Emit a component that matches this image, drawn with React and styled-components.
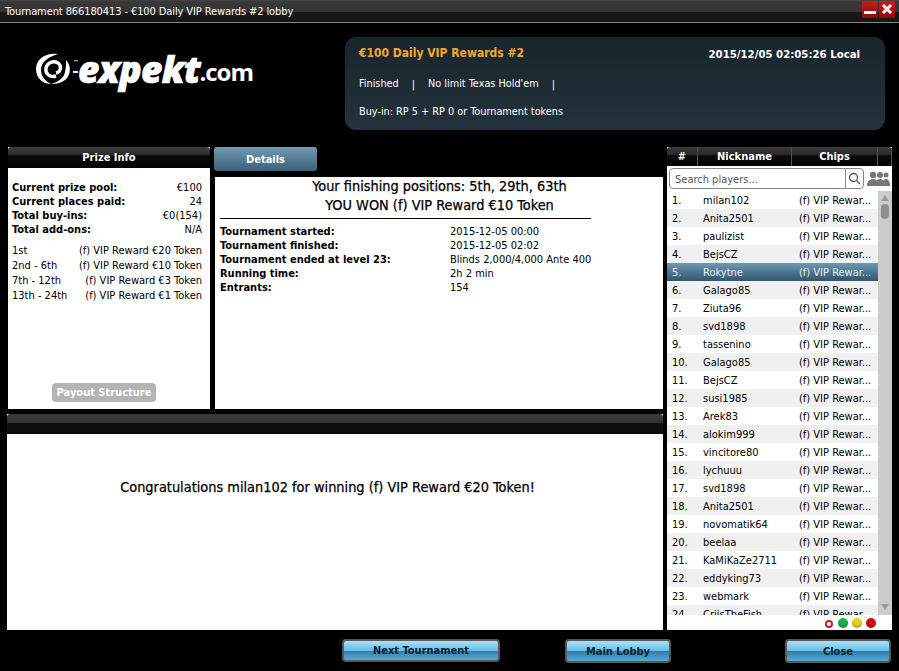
import React from "react";
import styled, { createGlobalStyle } from "styled-components";

const Global = createGlobalStyle`
  html, body { margin: 0; padding: 0; background: #000; }
  body { width: 899px; height: 671px; overflow: hidden; font-family: "DejaVu Sans Condensed", "DejaVu Sans", sans-serif; font-size: 11px; color: #000; }
  * { box-sizing: border-box; }
`;
const Page = styled.div`width: 899px; height: 671px; display: flex; flex-direction: column; background: #000; position: relative;`;
const TitleBar = styled.div`
  height: 23px; display: flex; align-items: center; justify-content: space-between; padding: 0 4px 0 5px;
  background: linear-gradient(#4a4a4a 0, #3a3a3a 1px, #333 12px, #1a1a1a 12px, #141414 22px, #888 22px);
  color: #fff; font-size: 11px; letter-spacing: -0.1px;
`;
const WinButtons = styled.div`display: flex; gap: 1px; margin-top: -5px;`;
const WinBtn = styled.div`
  width: 16px; height: 17px; background: linear-gradient(#d01818, #8e0a0a); display: flex; align-items: center; justify-content: center;
`;
const Header = styled.div`height: 124px; display: flex; padding: 14px 14px 0 36px; justify-content: space-between;`;
const Logo = styled.div`display: flex; align-items: center; height: 65px; color: #fff; font-family: "Open Sans", sans-serif; font-weight: 800; font-style: italic;`;
const LogoWord = styled.span`font-size: 37px; letter-spacing: -0.6px; line-height: 1; margin-top: -2px; -webkit-text-stroke: 0.7px #fff;`;
const LogoCom = styled.span`font-size: 24px; font-style: normal; font-weight: 700; letter-spacing: -1px; line-height: 1; margin-top: 5px; margin-left: -1px;`;
const InfoCard = styled.div`
  width: 540px; height: 93px; border-radius: 11px; background: linear-gradient(#1a252c, #23323c); color: #fff; padding: 7px 25px 0 14px;
`;
const InfoTop = styled.div`display: flex; justify-content: space-between; align-items: center; height: 20px; font-weight: 700;`;
const InfoTitle = styled.span`color: #f0a830; font-size: 12px; margin-top: -2px;`;
const InfoDate = styled.span`font-size: 11.3px;`;
const InfoRow = styled.div`display: flex; margin-top: ${p => p.$mt}px; height: 14px; align-items: center; font-size: 10.8px;`;
const Sep = styled.span`margin: 2px 13px 0 13px;`;
const Body = styled.div`flex: 1; display: flex; padding: 0 7px 0 7px; gap: 4px; height: 483px;`;
const MainCol = styled.div`width: 656px; display: flex; flex-direction: column;`;
const TopRow = styled.div`display: flex; height: 262px; padding-left: 1px; gap: 5px;`;
const PrizePanel = styled.section`width: 202px; display: flex; flex-direction: column; background: #fff;`;
const PanelHead = styled.div`
  height: 21px; flex: none; border-radius: 3px 3px 0 0; color: #fff; font-weight: 700; text-align: center; line-height: 22px;
  background: linear-gradient(#3d3d3d, #2e2e2e 7px, #0a0a0a 9px, #000);
`;
const PrizeBody = styled.div`flex: 1; padding: 13px 8px 0 4px; display: flex; flex-direction: column; position: relative;`;
const PrizeStat = styled.div`display: flex; justify-content: space-between; height: 14px; line-height: 14px;`;
const Bold = styled.span`font-weight: 700;`;
const PrizeList = styled.div`margin-top: 6px;`;
const PrizeRow = styled.div`display: flex; justify-content: space-between; height: 15px; line-height: 15px;`;
const Payout = styled.div`
  position: absolute; left: 44px; bottom: 7px; width: 104px; height: 19px; border-radius: 4px; background: #b4b4b4; color: #fff; font-weight: 700; text-align: center; line-height: 20px;
`;
const DetailCol = styled.div`flex: 1; display: flex; flex-direction: column;`;
const TabRow = styled.div`height: 30px; flex: none;`;
const Tab = styled.div`
  width: 103px; height: 24px; margin-left: -1px; border-radius: 3px; background: linear-gradient(#6f99b3, #3d617a); color: #fff; font-weight: 700; text-align: center; line-height: 25px;
`;
const DetailBody = styled.div`flex: 1; background: #fff; padding: 0 4px 0 5px;`;
const DetailTitle = styled.div`font-size: 14.4px; text-align: center; height: 19px; line-height: 19px; -webkit-text-stroke: 0.25px #000;`;
const Rule = styled.div`width: 371px; height: 1px; background: #000; margin: 3px 0 6px;`;
const DetailRow = styled.div`display: flex; height: 14px; line-height: 14px;`;
const DetailLabel = styled.span`width: 230px; font-weight: 700;`;
const MessagePanel = styled.section`margin-top: 5px; flex: 1; display: flex; flex-direction: column; background: #fff; padding-bottom: 41px;`;
const MessageHead = styled.div`height: 20px; flex: none; border-radius: 3px 3px 0 0; background: linear-gradient(#3a3a3a, #333 9px, #111 9px, #0a0a0a);`;
const MessageText = styled.div`font-size: 14.4px; text-align: center; padding: 45px 15px 0 0; line-height: 17px; -webkit-text-stroke: 0.25px #000;`;
const Players = styled.aside`width: 225px; display: flex; flex-direction: column; background: #fff; height: 483px;`;
const PlayersHead = styled.div`
  height: 19px; display: grid; grid-template-columns: 31px 94px 86px 14px; flex: none; border-radius: 3px 3px 0 0; overflow: hidden;
  background: linear-gradient(#3a3a3a, #2c2c2c 7px, #0c0c0c 9px, #000);
`;
const HeadCell = styled.div`color: #fff; font-weight: 700; text-align: center; line-height: 19px; border-right: 1px solid #555;`;
const SearchRow = styled.div`height: 25px; flex: none; display: flex; align-items: center; padding: 0 1px 0 2px; gap: 3px;`;
const SearchBox = styled.div`
  width: 195px; height: 21px; border: 1px solid #888; border-radius: 4px; display: flex; align-items: center; justify-content: space-between; padding: 2px 0 0 5px; color: #555;
`;
const SearchIcon = styled.div`width: 18px; height: 19px; margin-top: -2px; border-left: 1px solid #888; display: flex; align-items: center; justify-content: center;`;
const ListWrap = styled.div`height: 424px; display: flex; flex: none;`;
const List = styled.div`width: 211px; height: 424px; overflow: hidden;`;
const Row = styled.div`
  height: 18px; line-height: 20px; display: grid; grid-template-columns: 31px 96px 1fr; padding-left: 5px; white-space: nowrap;
  background: ${p => p.$sel ? "linear-gradient(#6f99b3, #2f5470)" : p.$alt ? "#f0f0f0" : "#fff"};
  color: ${p => p.$sel ? "#e8eef2" : "#000"};
`;
const Scrollbar = styled.div`width: 14px; background: #cccccc; position: relative; display: flex; flex-direction: column; align-items: center; padding-top: 4px;`;
const Thumb = styled.div`width: 8px; height: 15px; border-radius: 4px; background: #8e8e8e; margin-top: 3px;`;
const Arrow = styled.div`
  width: 0; height: 0; border-left: 4px solid transparent; border-right: 4px solid transparent;
  ${p => p.$down ? "border-top: 6px solid #999; position: absolute; bottom: 5px;" : "border-bottom: 6px solid #999;"}
`;
const StatusRow = styled.div`flex: 1; display: flex; align-items: center; justify-content: flex-end; gap: 4px; padding: 0 16px 0 0;`;
const Dot = styled.span`width: 10px; height: 10px; border-radius: 50%; background: ${p => p.$c}; box-shadow: inset 0 -2px 2px rgba(0,0,0,.2);`;
const Ring = styled.span`width: 8px; height: 8px; border-radius: 50%; border: 2px solid #c02020; margin: 3px 1px 0 0;`;
const Footer = styled.div`height: 41px; display: flex; align-items: flex-start; padding-top: 9px;`;
const Btn = styled.div`
  width: ${p => p.$w}px; height: ${p => p.$h}px; margin-left: ${p => p.$ml}px; border-radius: 4px; border: 2px solid #56585a;
  background: linear-gradient(#aee0f4, #62bfe8 50%, #2d7da9 51%, #5aa9d0);
  color: #0b2433; font-weight: 700; text-align: center; line-height: ${p => p.$h - 3}px;
`;

const players = ["milan102","Anita2501","paulizist","BejsCZ","Rokytne","Galago85","Ziuta96","svd1898","tassenino","Galago85","BejsCZ","susi1985","Arek83","alokim999","vincitore80","lychuuu","svd1898","Anita2501","novomatik64","beelaa","KaMiKaZe2711","eddyking73","webmark","CrijsTheFish"];

export default function App() {
  return (
    <Page>
      <Global />
      <TitleBar>
        <span>Tournament 866180413 - €100 Daily VIP Rewards #2 lobby</span>
        <WinButtons>
          <WinBtn><svg width="12" height="11" viewBox="0 0 12 11"><rect x="0" y="7" width="12" height="3" fill="#fff" /></svg></WinBtn>
          <WinBtn><svg width="12" height="12" viewBox="0 0 12 12"><path d="M2 2 10 10M10 2 2 10" stroke="#fff" strokeWidth="3" /></svg></WinBtn>
        </WinButtons>
      </TitleBar>
      <Header>
        <Logo>
          <svg width="42" height="34" viewBox="0 0 42 34" fill="#fff">
            <path d="M22 1C10 -1 0 6 0 16C0 25 7 31 15 31C9 28 5 23 5 17C5 9 12 4 22 1Z" />
            <path d="M30 7C35 12 35 20 31 25C27 30 20 31 15 31C22 29 28 25 29 19C30 15 30 11 30 7Z" />
            <path d="M20 23C13 25 9 20 10 15C11 10 17 7 22 10C26 13 25 19 20 20" fill="none" stroke="#fff" strokeWidth="3.4" />
            <rect x="38" y="7" width="4" height="1.4" fill="#999" />
            <rect x="37" y="18" width="5" height="2" />
          </svg>
          <LogoWord>expekt</LogoWord>
          <LogoCom>.com</LogoCom>
        </Logo>
        <InfoCard>
          <InfoTop><InfoTitle>€100 Daily VIP Rewards #2</InfoTitle><InfoDate>2015/12/05 02:05:26 Local</InfoDate></InfoTop>
          <InfoRow $mt={12}>Finished<Sep>|</Sep>No limit Texas Hold'em<Sep>|</Sep></InfoRow>
          <InfoRow $mt={14}>Buy-in: RP 5 + RP 0 or Tournament tokens</InfoRow>
        </InfoCard>
      </Header>
      <Body>
        <MainCol>
          <TopRow>
            <PrizePanel>
              <PanelHead>Prize Info</PanelHead>
              <PrizeBody>
                <PrizeStat><Bold>Current prize pool:</Bold><span>€100</span></PrizeStat>
                <PrizeStat><Bold>Current places paid:</Bold><span>24</span></PrizeStat>
                <PrizeStat><Bold>Total buy-ins:</Bold><span>€0(154)</span></PrizeStat>
                <PrizeStat><Bold>Total add-ons:</Bold><span>N/A</span></PrizeStat>
                <PrizeList>
                  <PrizeRow><span>1st</span><span>(f) VIP Reward €20 Token</span></PrizeRow>
                  <PrizeRow><span>2nd - 6th</span><span>(f) VIP Reward €10 Token</span></PrizeRow>
                  <PrizeRow><span>7th - 12th</span><span>(f) VIP Reward €3 Token</span></PrizeRow>
                  <PrizeRow><span>13th - 24th</span><span>(f) VIP Reward €1 Token</span></PrizeRow>
                </PrizeList>
                <Payout>Payout Structure</Payout>
              </PrizeBody>
            </PrizePanel>
            <DetailCol>
              <TabRow><Tab>Details</Tab></TabRow>
              <DetailBody>
                <DetailTitle>Your finishing positions: 5th, 29th, 63th</DetailTitle>
                <DetailTitle>YOU WON (f) VIP Reward €10 Token</DetailTitle>
                <Rule />
                <DetailRow><DetailLabel>Tournament started:</DetailLabel><span>2015-12-05 00:00</span></DetailRow>
                <DetailRow><DetailLabel>Tournament finished:</DetailLabel><span>2015-12-05 02:02</span></DetailRow>
                <DetailRow><DetailLabel>Tournament ended at level 23:</DetailLabel><span>Blinds 2,000/4,000 Ante 400</span></DetailRow>
                <DetailRow><DetailLabel>Running time:</DetailLabel><span>2h 2 min</span></DetailRow>
                <DetailRow><DetailLabel>Entrants:</DetailLabel><span>154</span></DetailRow>
              </DetailBody>
            </DetailCol>
          </TopRow>
          <MessagePanel>
            <MessageHead />
            <MessageText>Congratulations milan102 for winning (f) VIP Reward €20 Token!</MessageText>
          </MessagePanel>
        </MainCol>
        <Players>
          <PlayersHead>
            <HeadCell>#</HeadCell><HeadCell>Nickname</HeadCell><HeadCell>Chips</HeadCell><HeadCell />
          </PlayersHead>
          <SearchRow>
            <SearchBox>
              Search players...
              <SearchIcon>
                <svg width="13" height="13" viewBox="0 0 13 13" fill="none" stroke="#555" strokeWidth="1.3"><circle cx="5.5" cy="5.5" r="4" /><path d="M8.5 8.5 12 12" /></svg>
              </SearchIcon>
            </SearchBox>
            <svg width="24" height="16" viewBox="0 0 24 16" fill="#777">
              <circle cx="19" cy="4" r="2.5" /><path d="M15 15c0-5 2-7 4-7s4 2 4 7z" />
              <circle cx="13" cy="4" r="3" /><path d="M8 15c0-5 2-7 5-7s5 2 5 7z" />
              <circle cx="6" cy="4" r="3.2" /><path d="M0 15c0-5 3-7 6-7s6 2 6 7z" />
            </svg>
          </SearchRow>
          <ListWrap>
            <List>
              {players.map((n, i) => (
                <Row key={i} $alt={i % 2 === 1} $sel={i === 4}>
                  <span>{i + 1}.</span><span>{n}</span><span>(f) VIP Rewar...</span>
                </Row>
              ))}
            </List>
            <Scrollbar><Arrow /><Thumb /><Arrow $down /></Scrollbar>
          </ListWrap>
          <StatusRow>
            <Ring /><Dot $c="#1cb04a" /><Dot $c="#e8cc20" /><Dot $c="#d01010" />
          </StatusRow>
        </Players>
      </Body>
      <Footer>
        <Btn $w={158} $h={23} $ml={342}>Next Tournament</Btn>
        <Btn $w={106} $h={24} $ml={65}>Main Lobby</Btn>
        <Btn $w={106} $h={24} $ml={114}>Close</Btn>
      </Footer>
    </Page>
  );
}
